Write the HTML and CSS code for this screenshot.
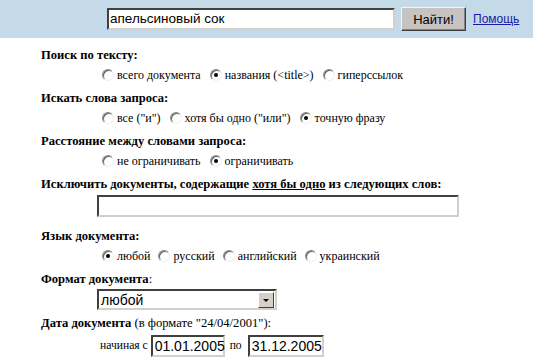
FILE: index.html
```html
<!DOCTYPE html>
<html>
<head>
<meta charset="utf-8">
<link rel="stylesheet" href="styles.css">
</head>
<body>
<div class="top">
  <div class="q">апельсиновый сок</div>
  <div class="btn">Найти!</div>
  <a class="help" href="#">Помощь</a>
</div>
<div class="form">
  <div class="h">Поиск по тексту:</div>
  <div class="opts"><span class="r"></span><span class="l">всего документа</span><span class="r on"></span><span class="l">названия (&lt;title&gt;)</span><span class="r"></span><span class="l">гиперссылок</span></div>
  <div class="h">Искать слова запроса:</div>
  <div class="opts"><span class="r"></span><span class="l">все ("и")</span><span class="r"></span><span class="l">хотя бы одно ("или")</span><span class="r on"></span><span class="l">точную фразу</span></div>
  <div class="h">Расстояние между словами запроса:</div>
  <div class="opts"><span class="r"></span><span class="l">не ограничивать</span><span class="r on"></span><span class="l">ограничивать</span></div>
  <div class="h">Исключить документы, содержащие <u>хотя бы одно</u> из следующих слов:</div>
  <div class="fld f-wide"><div class="box wide"></div></div>
  <div class="h h-lang">Язык документа:</div>
  <div class="opts"><span class="r on"></span><span class="l s">любой</span><span class="r"></span><span class="l s">русский</span><span class="r"></span><span class="l s">английский</span><span class="r"></span><span class="l s">украинский</span></div>
  <div class="h">Формат документа<span class="n">:</span></div>
  <div class="fld"><div class="box sel"><span>любой</span><span class="arr"></span></div></div>
  <div class="h h-date">Дата документа <span class="n">(в формате "24/04/2001"):</span></div>
  <div class="fld dates"><span class="l">начиная с</span><div class="box d1">01.01.2005</div><span class="l po">по</span><div class="box d2">31.12.2005</div></div>
</div>
</body>
</html>
```
FILE: styles.css
```css
html, body { margin: 0; padding: 0; background: #fff; }
body { font-family: "Liberation Serif", "Times New Roman", serif; font-size: 13px; color: #000; width: 533px; height: 357px; overflow: hidden; }
.top { background: #c4dae8; height: 38px; display: flex; align-items: center; padding-left: 107px; box-sizing: border-box; }
.q { width: 288px; height: 22px; box-sizing: border-box; background: #fff; border: 2px solid; border-color: #404040 #d4d0c8 #d4d0c8 #404040; font-family: "Liberation Sans", Arial, sans-serif; font-size: 13.5px; line-height: 18px; padding-left: 1px; }
.btn { margin-left: 6px; width: 65px; height: 24px; box-sizing: border-box; background: #c6c3c1; border: 1px solid; border-color: #f4f4f4 #404040 #404040 #f4f4f4; box-shadow: inset -1px -1px 0 #808080; font-family: "Liberation Sans", Arial, sans-serif; font-size: 13px; display: flex; align-items: center; justify-content: center; }
.help { margin-left: 7px; color: #1a1aa6; font-family: "Liberation Sans", Arial, sans-serif; font-size: 12px; }
.form { padding: 7px 0 0 41px; }
.h { font-weight: bold; font-size: 12.6px; height: 20px; line-height: 20px; white-space: nowrap; }
.h .n { font-weight: normal; font-size: 12.6px; }
.opts { padding: 2px 0 0 61px; display: flex; align-items: flex-start; box-sizing: border-box; height: 23px; }
.l { font-family: "Liberation Serif", "Times New Roman", serif; font-size: 12px; line-height: 16px; margin-right: 9px; white-space: nowrap; }
.l.s { margin-right: 8px; }
.r { width: 12px; height: 12px; box-sizing: border-box; border-radius: 50%; border: 1px solid; border-color: #8a8a8a #f0f0f0 #f0f0f0 #8a8a8a; background: #fff; display: inline-block; margin: 2px 3px 0 0; position: relative; box-shadow: inset 1px 1px 0 #606060; }
.r.on::after { content: ""; position: absolute; left: 3px; top: 3px; width: 4px; height: 4px; border-radius: 50%; background: #000; }
.fld { padding-left: 56px; display: flex; align-items: center; }
.f-wide { margin-top: 1px; }
.h-lang { margin-top: 9px; }
.h-date { margin-top: 3px; }
.dates { margin-top: 2px; padding-left: 59px; }
.box { box-sizing: border-box; height: 22px; border: 2px solid; border-color: #404040 #d4d0c8 #d4d0c8 #404040; background: #fff; font-family: "Liberation Sans", Arial, sans-serif; font-size: 14px; line-height: 18px; padding-left: 2px; }
.wide { width: 362px; }
.sel { width: 180px; height: 21px; display: flex; justify-content: space-between; align-items: center; padding-right: 1px; }
.arr { width: 16px; height: 16px; box-sizing: border-box; background: #d4d0c8; border: 1px solid; border-color: #fff #404040 #404040 #fff; position: relative; }
.arr::after { content: ""; position: absolute; left: 4px; top: 6px; border-left: 3px solid transparent; border-right: 3px solid transparent; border-top: 3px solid #000; }
.dates .l { margin-right: 3px; line-height: 22px; font-size: 11.6px; }
.dates .po { margin: 0 6px 0 5px; }
.d1 { width: 74px; }
.d2 { width: 76px; }
```
